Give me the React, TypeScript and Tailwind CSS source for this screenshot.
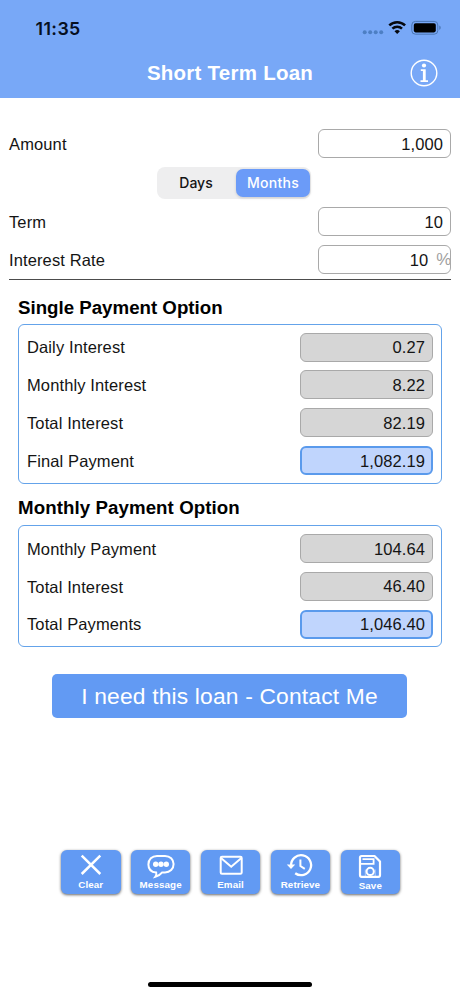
import type { ReactNode } from "react";

function StatusBar() {
  return (
    <div className="flex h-[48px] items-end justify-between pl-[35.5px] pr-[19px]">
      <span className="mb-[8.5px] font-[Inter] text-[17.8px] leading-[22px] font-semibold tracking-[0.4px] text-[#07101f]">
        11:35
      </span>
      <svg width="79" height="16" viewBox="0 0 79 16" className="mb-[12px]">
        <g fill="#4d7fc4">
          <circle cx="2.7" cy="12.3" r="2" />
          <circle cx="8.2" cy="12.3" r="2" />
          <circle cx="13.7" cy="12.3" r="2" />
          <circle cx="19.2" cy="12.3" r="2" />
        </g>
        <g fill="none" stroke="#05080f" strokeWidth="2.5">
          <path d="M27.3 5.4 a11.2 11.2 0 0 1 15.8 0" />
          <path d="M30.4 8.7 a6.9 6.9 0 0 1 9.6 0" />
        </g>
        <path d="M35.2 14 L32.5 11.3 a3.9 3.9 0 0 1 5.4 0 Z" fill="#05080f" />
        <rect x="49.8" y="1.4" width="26" height="12.8" rx="3.6" fill="none" stroke="#4a76b4" strokeWidth="1" />
        <path d="M77.3 5.6 a2.4 2.4 0 0 1 0 4.4Z" fill="#4a76b4" />
        <rect x="51.8" y="3.2" width="22" height="9.2" rx="1.8" fill="#000" />
      </svg>
    </div>
  );
}

function Header() {
  return (
    <header className="h-[98px] bg-[#78a8f7]">
      <StatusBar />
      <div className="grid h-[50px] grid-cols-[60px_1fr_60px] items-center">
        <span />
        <h1 className="text-center text-[20.5px] font-bold tracking-[0.25px] whitespace-nowrap text-white">
          Short Term Loan
        </h1>
        <svg width="28" height="28" viewBox="0 0 28 28" className="ml-[10px]">
          <circle cx="14" cy="14" r="12.8" fill="none" stroke="#fff" strokeWidth="1.4" />
          <circle cx="14" cy="6.5" r="2.1" fill="#fff" />
          <path d="M10.8 10.2 H15.7 V21.2 H18 V23 H10.5 V21.2 H12.9 V11.9 H10.8Z" fill="#fff" />
        </svg>
      </div>
    </header>
  );
}

type Kind = "input" | "result" | "total";

const fieldStyle: Record<Kind, string> = {
  input: "border border-[#a9a9a9] bg-white pr-[7px]",
  result: "border border-[#a9a9a9] bg-[#d6d6d6] pr-[7px]",
  total: "border-2 border-[#5a9aec] bg-[#c0d5fd] pr-[6px]",
};

function Field({ kind, children }: { kind: Kind; children: ReactNode }) {
  return (
    <div
      className={`flex h-[29px] w-[133.5px] items-center justify-end overflow-hidden rounded-[6px] pt-px text-[16.5px] tracking-[0.1px] ${fieldStyle[kind]}`}
    >
      {children}
    </div>
  );
}

function Row({ label, kind, children }: { label: string; kind: Kind; children: ReactNode }) {
  return (
    <div className="flex h-[29px] items-center justify-between">
      <span className="pt-[1.5px] text-[16.5px] tracking-[0.12px]">{label}</span>
      <Field kind={kind}>{children}</Field>
    </div>
  );
}

function Tool({ label, children }: { label: string; children: ReactNode }) {
  return (
    <button className="flex h-[44.5px] w-[59.5px] flex-col items-center rounded-[6px] bg-[#629af3] pt-[2px] text-white shadow-[0_1px_3px_rgba(0,0,0,0.6)]">
      <svg
        width="30"
        height="27"
        viewBox="0 0 30 27"
        fill="none"
        stroke="currentColor"
        strokeWidth="2"
      >
        {children}
      </svg>
      <span className={`text-[9.8px] leading-[12px] font-bold tracking-[0.1px] ${label === "Save" ? "pt-px" : ""}`}>
        {label}
      </span>
    </button>
  );
}

export default function App() {
  return (
    <div className="flex h-[996px] w-[460px] flex-col overflow-hidden bg-white font-['Liberation_Sans',Arial,sans-serif] text-[#141414]">
      <Header />

      <section className="mr-[9px] ml-[9px] flex h-[182px] flex-col border-b border-[#4c4c4c] pt-[31px]">
        <Row label="Amount" kind="input">1,000</Row>
        <div className="mt-[9px] ml-[148px] flex h-[32px] w-[154px] rounded-[8px] bg-[#eeeeef] p-[2px] pr-[1px] font-[Inter] text-[14px] font-medium">
          <div className="flex w-[77px] items-center justify-center pr-[3px] pb-[2px]">Days</div>
          <div className="flex w-[74px] items-center justify-center rounded-[7px] bg-[#6b9bf8] pb-[2px] tracking-[0.3px] text-white shadow-[0_1px_3px_rgba(0,0,0,0.15)]">
            Months
          </div>
        </div>
        <div className="mt-[8px] flex flex-col gap-[9px]">
          <Row label="Term" kind="input">10</Row>
          <Row label="Interest Rate" kind="input">
            <span>10</span>
            <span className="-mr-[8.5px] ml-[8px] text-[17px] text-[#a0a0a0]">%</span>
          </Row>
        </div>
      </section>

      <main className="mx-[18px] flex flex-col">
        <h2 className="mt-[15.5px] text-[18.7px] leading-[24px] font-bold text-black">Single Payment Option</h2>
        <div className="mt-[4px] flex h-[160px] flex-col gap-[8.8px] rounded-[6px] border border-[#64a3ea] px-[8px] pt-[8px]">
          <Row label="Daily Interest" kind="result">0.27</Row>
          <Row label="Monthly Interest" kind="result">8.22</Row>
          <Row label="Total Interest" kind="result">82.19</Row>
          <Row label="Final Payment" kind="total">1,082.19</Row>
        </div>

        <h2 className="mt-[12px] text-[18.7px] leading-[24px] font-bold tracking-[0.08px] text-black">
          Monthly Payment Option
        </h2>
        <div className="mt-[5.5px] flex h-[122px] flex-col gap-[8.8px] rounded-[6px] border border-[#64a3ea] px-[8px] pt-[8px]">
          <Row label="Monthly Payment" kind="result">104.64</Row>
          <Row label="Total Interest" kind="result">46.40</Row>
          <Row label="Total Payments" kind="total">1,046.40</Row>
        </div>
      </main>

      <button className="mt-[26.5px] ml-[52px] h-[44.5px] w-[355px] rounded-[5px] bg-[#629af3] pt-px text-[22.8px] tracking-[0.18px] text-white">
        I need this loan - Contact Me
      </button>

      <nav className="mt-[131.5px] ml-[61px] flex gap-[10.4px]">
        <Tool label="Clear">
          <path d="M5.7 3.7 L24.3 22 M24.3 3.7 L5.7 22" strokeWidth="2.5" />
        </Tool>
        <Tool label="Message">
          <path d="M10.2 20.5 C5.2 20 2.4 16.8 2.4 12.4 C2.4 7.4 6 3.9 11 3.9 H19 C24 3.9 27.6 7.4 27.6 12.1 C27.6 17 24 20.4 19 20.4 H16.2 C14.4 22.6 12.3 24.2 9.3 24.9 C10.3 23.6 10.6 22.2 10.2 20.5Z" />
          <g fill="currentColor" stroke="none">
            <circle cx="9.7" cy="12.2" r="2.7" />
            <circle cx="15" cy="12.2" r="2.7" />
            <circle cx="20.3" cy="12.2" r="2.7" />
          </g>
        </Tool>
        <Tool label="Email">
          <rect x="4.7" y="4.8" width="21" height="17" rx="1.3" />
          <path d="M5 6 L15.2 14.8 L25.4 6" />
        </Tool>
        <Tool label="Retrieve">
          <path d="M6.1 13.5 A10 10 0 1 1 10.2 21.2" strokeWidth="2.3" />
          <path d="M1.8 12.5 H10.2 L6 17Z" fill="currentColor" stroke="none" />
          <path d="M15.4 7.5 V14 L19.8 16.8" />
        </Tool>
        <Tool label="Save">
          <path d="M6.6 4 H19.5 L25 9.5 V23 Q25 24.8 23.4 24.8 H6.6 Q5 24.8 5 23 V5.6 Q5 4 6.6 4Z" strokeLinejoin="round" strokeWidth="2.2" />
          <path d="M5.5 11.8 H18.6 V7.2 H7.5" strokeWidth="1.8" />
          <path d="M10.3 24 V17.5 M20.2 24 V17.5" strokeWidth="0.5" />
          <circle cx="15.2" cy="19.4" r="3.6" strokeWidth="2" />
        </Tool>
      </nav>

      <div className="mt-auto mb-[9px] ml-[148px] h-[5.5px] w-[164px] rounded-full bg-black" />
    </div>
  );
}
